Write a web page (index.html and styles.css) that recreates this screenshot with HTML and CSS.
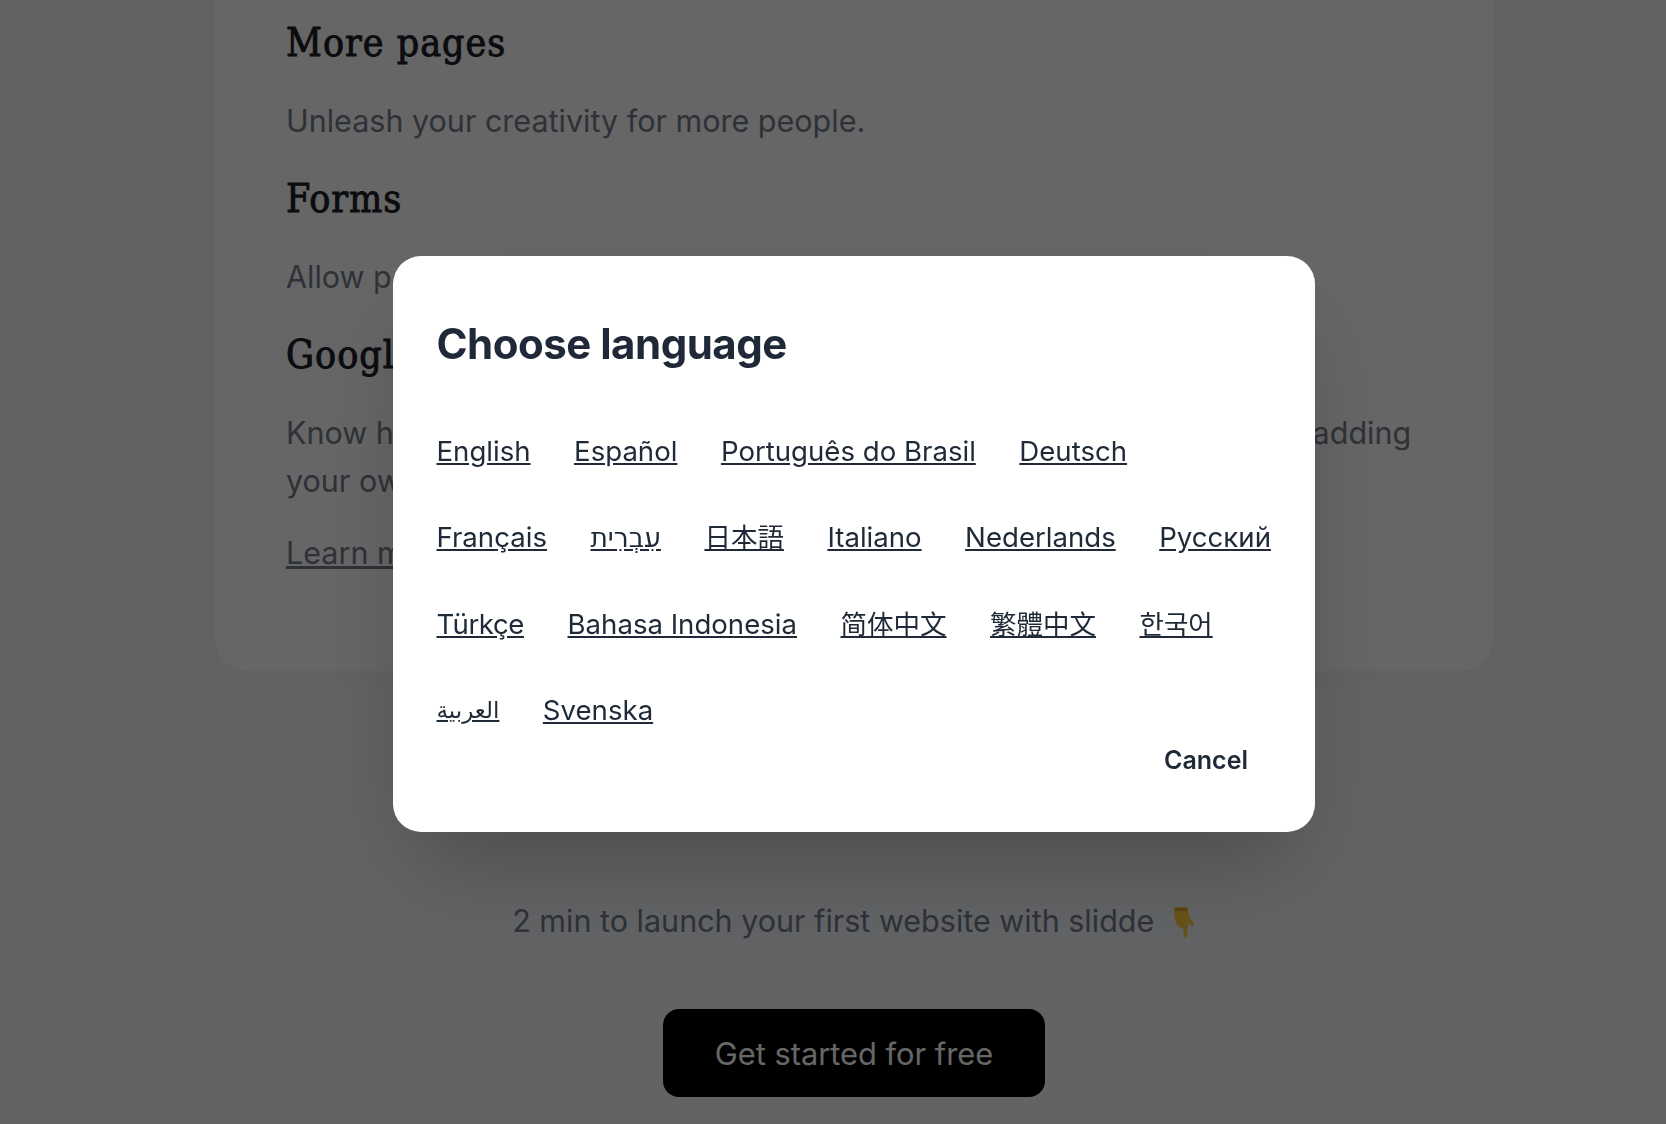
FILE: index.html
```html
<!DOCTYPE html>
<html lang="en">
<head>
  <meta charset="UTF-8" />
  <meta name="viewport" content="width=device-width, initial-scale=1.0" />
  <title>Choose language</title>
  <link rel="stylesheet" href="styles.css">
</head>
<body>
  <!-- Page behind the dialog -->
  <div class="page">
    <div class="card">
      <h3>More pages</h3>
      <p>Unleash your creativity for more people.</p>
      <h3>Forms</h3>
      <p>Allow people to contact you through a form.</p>
      <h3>Google Analytics</h3>
      <p>Know how most users visit your website and where they come from by adding your own tracking code.</p>
      <a class="learn" href="#">Learn more</a>
    </div>
    <div class="cta">
      <p class="cta-text">2 min to launch your first website with slidde
        <svg class="hand" viewBox="0 0 24 34" aria-hidden="true">
          <path fill="#ffcf3f" d="M2 4Q2 2 4 2H14Q16 2 16 5L17 11L22 19Q23 22 20 21L16 18L15 31Q14 33 13 33Q12 33 12 31L11 23Q5 23 3 15Z"/>
          <path fill="#e0a52d" d="M3 3H15V6H3Z"/>
        </svg>
      </p>
      <a class="cta-btn" href="#">Get started for free</a>
    </div>
  </div>

  <!-- Language dialog -->
  <div class="overlay">
    <div class="modal">
      <h2>Choose language</h2>
      <div class="lang-list">
        <div class="lang-row">
          <a href="#">English</a>
          <a href="#">Español</a>
          <a href="#">Português do Brasil</a>
          <a href="#">Deutsch</a>
        </div>
        <div class="lang-row">
          <a href="#">Français</a>
          <a href="#" lang="he">עִבְרִית</a>
          <a href="#" lang="ja">日本語</a>
          <a href="#">Italiano</a>
          <a href="#">Nederlands</a>
          <a href="#">Русский</a>
        </div>
        <div class="lang-row">
          <a class="tight" href="#">Türkçe</a>
          <a href="#">Bahasa Indonesia</a>
          <a href="#" lang="zh-CN">简体中文</a>
          <a href="#" lang="zh-TW">繁體中文</a>
          <a href="#" lang="ko">한국어</a>
        </div>
        <div class="lang-row">
          <a href="#" lang="ar">العربية</a>
          <a href="#">Svenska</a>
        </div>
      </div>
      <div class="modal-actions">
        <button class="cancel">Cancel</button>
      </div>
    </div>
  </div>
</body>
</html>
```

FILE: styles.css
```css
* {
  box-sizing: border-box;
}

html,
body {
  height: 100%;
}

body {
  margin: 0;
  overflow: hidden;
  background: #f5f7fa;
  font-family: Inter, "Noto Sans CJK SC", "DejaVu Sans", sans-serif;
  color: #1f2937;
}

.page {
  padding-left: 42px;
  margin-top: -65px;
  display: flex;
  flex-direction: column;
  align-items: center;
}

.card {
  width: 1278px;
  height: 736px;
  padding: 72px 71px 0;
  background: white;
  border-radius: 32px;
  box-shadow: 0 4px 30px rgba(0, 0, 0, 0.03);
}

.card h3 {
  margin: 0;
  font-family: "DejaVu Serif Condensed", "DejaVu Serif", serif;
  font-stretch: condensed;
  font-size: 39px;
  line-height: 72px;
  font-weight: 400;
  letter-spacing: 1px;
  -webkit-text-stroke: 0.9px #1c2029;
  color: #1c2029;
}

.card p {
  margin: 18px 0;
  font-size: 30.5px;
  line-height: 48px;
  color: #767c8c;
}

.learn {
  display: inline-block;
  margin-top: 6px;
  font-size: 30.5px;
  line-height: 48px;
  color: #767c8c;
}

.cta {
  display: flex;
  flex-direction: column;
  align-items: center;
  margin-top: 226px;
}

.cta-text {
  margin: 0;
  font-size: 30.5px;
  line-height: 48px;
  color: #767c8c;
}

.hand {
  width: 24px;
  height: 34px;
  margin-left: 9px;
  vertical-align: -7px;
}

.cta-btn {
  display: block;
  margin-top: 64px;
  width: 382px;
  height: 88px;
  border-radius: 16px;
  background: black;
  color: white;
  font-size: 30.8px;
  line-height: 90px;
  text-align: center;
  text-decoration: none;
}

.overlay {
  position: fixed;
  inset: 0;
  padding-left: 42px;
  padding-top: 256px;
  display: flex;
  justify-content: center;
  align-items: flex-start;
  background: rgba(0, 0, 0, 0.6);
}

.modal {
  width: 922px;
  height: 576px;
  padding: 58px 40px 0 43.5px;
  background: white;
  border-radius: 28px;
  box-shadow: 0 50px 100px -24px rgba(0, 0, 0, 0.25);
}

.modal h2 {
  margin: 0;
  font-size: 42px;
  line-height: 60px;
  font-weight: 700;
  letter-spacing: -0.5px;
  color: #1f2937;
}

.lang-list {
  margin-top: 56px;
  display: flex;
  flex-direction: column;
  gap: 44.4px;
}

.lang-row {
  display: flex;
  gap: 43.5px;
}

.lang-row a {
  font-size: 27.6px;
  line-height: 42px;
  color: #1f2937;
}

.lang-row a.tight {
  letter-spacing: -0.4px;
}

.lang-row a:lang(ja),
.lang-row a:lang(zh),
.lang-row a:lang(ko) {
  font-size: 26.5px;
}

.lang-row a:lang(he) {
  font-size: 26.5px;
}

.lang-row a:lang(ar) {
  font-size: 23px;
}

.modal-actions {
  display: flex;
  justify-content: flex-end;
  margin-top: 9px;
  margin-right: 4px;
}

.cancel {
  padding: 0 23px;
  border: 0;
  background: none;
  font-family: inherit;
  font-size: 25px;
  line-height: 40px;
  font-weight: 600;
  color: #1f2937;
}
```
